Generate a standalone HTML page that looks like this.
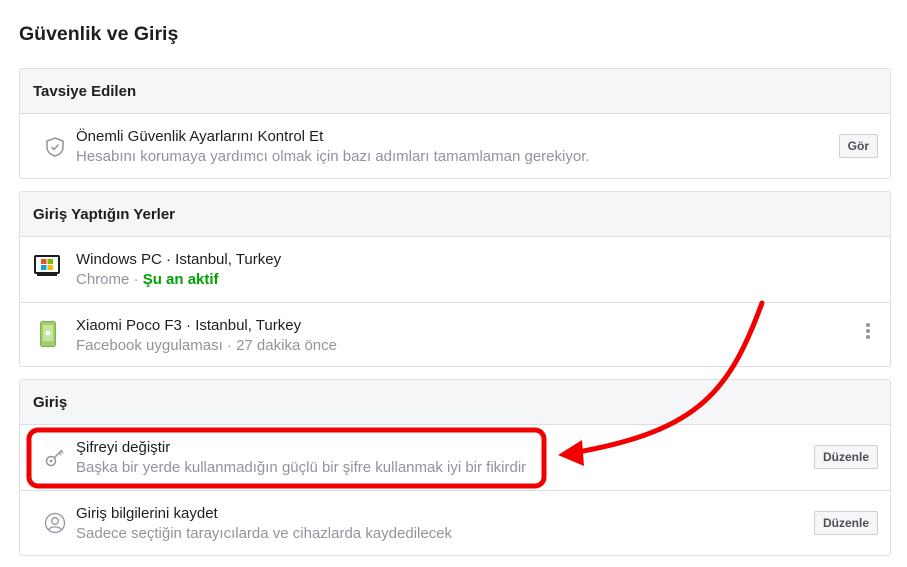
<!DOCTYPE html>
<html><head><meta charset="utf-8"><style>
*{box-sizing:border-box;margin:0;padding:0}
body{width:907px;height:567px;background:#fff;font-family:"Liberation Sans",Arial,sans-serif;position:relative;overflow:hidden;color:#1c1e21}
h1{position:absolute;left:19px;top:23px;font-size:19.5px;font-weight:bold;color:#1c1e21}
.box{position:absolute;left:19px;width:872px;border:1px solid #dddfe2;border-radius:3px;background:#fff}
.hd{height:45px;background:#f5f6f7;border-bottom:1px solid #dddfe2;font-size:15px;font-weight:bold;padding:14px 13px}
.row{height:65px;position:relative;border-top:1px solid #dddfe2}
.hd+.row{border-top:none}
.t1{position:absolute;left:56px;top:14px;font-size:15px;color:#1c1e21}
.t2{position:absolute;left:56px;top:34px;font-size:15px;color:#90949c}
.btn{position:absolute;right:12px;top:20px;height:24px;border:1px solid #ccd0d5;background:#f5f6f7;border-radius:2px;font-size:12px;font-weight:bold;color:#4b4f56;padding:4px 8px}
.ic{position:absolute;left:14px;top:20px}
</style></head><body>
<h1>Güvenlik ve Giriş</h1>
<div class="box" style="top:68px;height:111px">
<div class="hd">Tavsiye Edilen</div>
<div class="row"><svg class="ic" style="left:24px;top:22px" width="22" height="22" viewBox="0 0 22 22"><path d="M11 2 L19 5 V11 C19 16 15 19 11 20 C7 19 3 16 3 11 V5 Z" fill="none" stroke="#90949c" stroke-width="1.5"/><path d="M7.5 11 L10 13.5 L14.5 8.5" fill="none" stroke="#90949c" stroke-width="1.5"/></svg>
<div class="t1">Önemli Güvenlik Ayarlarını Kontrol Et</div><div class="t2">Hesabını korumaya yardımcı olmak için bazı adımları tamamlaman gerekiyor.</div><div class="btn">Gör</div></div>
</div>
<div class="box" style="top:191px;height:176px">
<div class="hd">Giriş Yaptığın Yerler</div>
<div class="row"><svg class="ic" style="top:18px" width="26" height="24" viewBox="0 0 26 24"><rect x="1" y="1" width="24" height="17" rx="1" fill="#fff" stroke="#1c1e21" stroke-width="2"/><rect x="3" y="19" width="20" height="2" fill="#1c1e21"/><rect x="7" y="4" width="5.5" height="5" fill="#f25022"/><rect x="13.5" y="4" width="5.5" height="5" fill="#7fba00"/><rect x="7" y="10" width="5.5" height="5" fill="#00a4ef"/><rect x="13.5" y="10" width="5.5" height="5" fill="#ffb900"/></svg>
<div class="t1">Windows PC · Istanbul, Turkey</div><div class="t2">Chrome · <b style="color:#00a400">Şu an aktif</b></div></div>
<div class="row"><svg class="ic" style="left:20px;top:18px" width="16" height="26" viewBox="0 0 16 26"><rect x="0.5" y="0.5" width="15" height="25" rx="2" fill="#a1d06a" stroke="#7fae4a"/><rect x="3" y="4" width="10" height="16" fill="#c7e5a2"/><circle cx="8" cy="12" r="2.3" fill="#fff"/></svg>
<div class="t1">Xiaomi Poco F3 · Istanbul, Turkey</div><div class="t2">Facebook uygulaması · 27 dakika önce</div>
<div style="position:absolute;right:20px;top:20px;width:4px"><div style="width:4px;height:4px;border-radius:2px;background:#90949c;margin-bottom:2px"></div><div style="width:4px;height:4px;border-radius:2px;background:#90949c;margin-bottom:2px"></div><div style="width:4px;height:4px;border-radius:2px;background:#90949c"></div></div></div>
</div>
<div class="box" style="top:379px;height:177px">
<div class="hd">Giriş</div>
<div class="row"><svg class="ic" style="left:24px;top:21px" width="22" height="22" viewBox="0 0 22 22"><circle cx="7" cy="15" r="4.5" fill="none" stroke="#90949c" stroke-width="1.5"/><circle cx="7" cy="15" r="1.3" fill="#90949c"/><path d="M10 12 L18 4 M15 7 L17 9 M17 5 L19 7" fill="none" stroke="#90949c" stroke-width="1.5"/></svg>
<div class="t1">Şifreyi değiştir</div><div class="t2">Başka bir yerde kullanmadığın güçlü bir şifre kullanmak iyi bir fikirdir</div><div class="btn">Düzenle</div></div>
<div class="row"><svg class="ic" style="left:24px;top:21px" width="22" height="22" viewBox="0 0 22 22"><circle cx="11" cy="11" r="9.5" fill="none" stroke="#90949c" stroke-width="1.3"/><circle cx="11" cy="9" r="3.3" fill="none" stroke="#90949c" stroke-width="1.3"/><path d="M5 17.5 C6.5 14 15.5 14 17 17.5" fill="none" stroke="#90949c" stroke-width="1.3"/></svg>
<div class="t1">Giriş bilgilerini kaydet</div><div class="t2">Sadece seçtiğin tarayıcılarda ve cihazlarda kaydedilecek</div><div class="btn">Düzenle</div></div>
</div>
<svg style="position:absolute;left:0;top:0" width="907" height="567">
<rect x="29" y="430" width="515" height="56" rx="9" fill="none" stroke="#f00000" stroke-width="5"/>
<path d="M762 303 C730 390 700 430 578 452" fill="none" stroke="#f00000" stroke-width="5" stroke-linecap="round"/>
<path d="M558 455 L582 440 L584 466 Z" fill="#f00000"/>
</svg>
</body></html>
